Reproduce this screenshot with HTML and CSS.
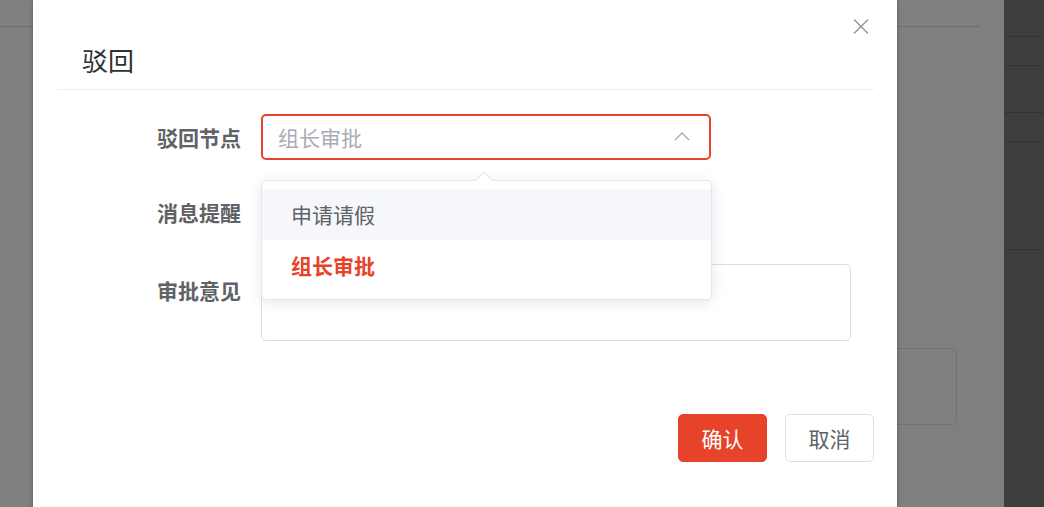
FILE: index.html
```html
<!DOCTYPE html>
<html lang="zh-CN">
<head>
<meta charset="utf-8">
<title>驳回</title>
<link rel="stylesheet" href="styles.css">
</head>
<body>
<div class="page">
  <div class="page-main">
    <div class="page-topline"></div>
    <div class="page-card"></div>
  </div>
  <div class="page-side">
    <div class="side-row r1"></div>
    <div class="side-row r2"></div>
    <div class="side-row r3"></div>
    <div class="side-row r4"></div>
    <div class="side-row r5"></div>
  </div>
</div>

<div class="dialog">
  <button class="dialog-close" aria-label="关闭">
    <svg width="16" height="17" viewBox="0 0 16 17"><path d="M1 1.5 L15 15.5 M15 1.5 L1 15.5" stroke="#909399" stroke-width="1.4" fill="none"/></svg>
  </button>
  <div class="dialog-header">
    <span class="dialog-title">驳回</span>
  </div>
  <div class="dialog-body">
    <div class="form-row row-select">
      <label class="form-label">驳回节点</label>
      <div class="form-control">
        <div class="select is-focus">
          <span class="select-placeholder">组长审批</span>
          <svg class="select-arrow" width="16" height="9" viewBox="0 0 16 9"><path d="M1 8 L8 1 L15 8" stroke="#a8abb2" stroke-width="1.4" fill="none"/></svg>
        </div>
        <div class="dropdown">
          <span class="dropdown-arrow"></span>
          <ul class="dropdown-list">
            <li class="dropdown-item is-hover">申请请假</li>
            <li class="dropdown-item is-selected">组长审批</li>
          </ul>
        </div>
      </div>
    </div>
    <div class="form-row row-plain">
      <label class="form-label">消息提醒</label>
      <div class="form-control"></div>
    </div>
    <div class="form-row row-text">
      <label class="form-label label-top">审批意见</label>
      <div class="form-control">
        <div class="textarea"></div>
      </div>
    </div>
  </div>
  <div class="dialog-footer">
    <button class="btn btn-primary">确认</button>
    <button class="btn btn-default">取消</button>
  </div>
</div>
</body>
</html>
```

FILE: styles.css
```css
* { box-sizing: border-box; }
html, body {
  margin: 0;
  padding: 0;
  width: 1044px;
  height: 507px;
  overflow: hidden;
  font-family: "Noto Sans CJK SC", "Noto Sans", sans-serif;
}
.page {
  display: flex;
  width: 1044px;
  height: 507px;
  background: #7f7f7f;
}
.page-main {
  flex: 1;
  position: relative;
}
.page-topline {
  margin-top: 26px;
  width: 980px;
  height: 1px;
  background: #6e6e6e;
}
.page-card {
  position: absolute;
  left: 760px;
  top: 348px;
  width: 197px;
  height: 77px;
  border: 1px solid #717171;
  border-radius: 5px;
}
.page-side {
  width: 40px;
  background: #3e3e3e;
  position: relative;
}
.side-row {
  position: absolute;
  left: 0;
  right: 0;
  height: 1px;
  background: #343434;
}
.side-row.r1 { top: 36px; }
.side-row.r2 { top: 65px; }
.side-row.r3 { top: 112px; }
.side-row.r4 { top: 141px; }
.side-row.r5 { top: 249px; }

.dialog {
  position: absolute;
  left: 33px;
  top: 0;
  width: 864px;
  height: 520px;
  background: #fff;
  box-shadow: 0 0 4px rgba(0, 0, 0, 0.25);
  padding: 0 23px 0 24px;
}
.dialog-close {
  position: absolute;
  right: 28px;
  top: 18px;
  width: 16px;
  height: 17px;
  padding: 0;
  border: 0;
  background: none;
  display: block;
}
.dialog-close svg { display: block; }
.dialog-header {
  height: 90px;
  padding: 44px 0 0 25px;
  border-bottom: 1px solid #ebeef5;
}
.dialog-title {
  display: block;
  font-size: 26px;
  line-height: 32px;
  color: #303133;
}
.dialog-body {
  padding: 24px 0 0 84px;
}
.form-row {
  display: flex;
  align-items: flex-start;
  gap: 20px;
}
.row-select { margin-bottom: 29px; }
.row-plain { margin-bottom: 29px; height: 46px; }
.form-label {
  width: 100px;
  flex: none;
  text-align: right;
  font-size: 21px;
  font-weight: 700;
  line-height: 46px;
  color: #606266;
}
.label-top { padding-top: 3px; }
.form-control {
  position: relative;
}
.select {
  width: 450px;
  height: 46px;
  border: 2px solid #e6432a;
  border-radius: 5px;
  display: flex;
  align-items: center;
  justify-content: space-between;
  padding: 0 19px 0 15px;
}
.select-placeholder {
  font-size: 21px;
  color: #a8abb2;
}
.select-arrow { display: block; margin-top: -2px; }

.dropdown {
  position: absolute;
  z-index: 5;
  left: 0;
  top: 66px;
  width: 451px;
  background: #fff;
  border: 1px solid #e4e7ed;
  border-radius: 5px;
  box-shadow: 0 3px 14px rgba(0, 0, 0, 0.1);
}
.dropdown-arrow {
  position: absolute;
  left: 216px;
  top: -7px;
  width: 12px;
  height: 12px;
  background: #fff;
  border-top: 1px solid #e4e7ed;
  border-left: 1px solid #e4e7ed;
  transform: rotate(45deg);
}
.dropdown-list {
  list-style: none;
  margin: 0;
  padding: 8px 0;
  position: relative;
}
.dropdown-item {
  height: 51px;
  line-height: 51px;
  padding-left: 29px;
  font-size: 21px;
  color: #606266;
}
.dropdown-item.is-hover { background: #f5f7fa; }
.dropdown-item.is-selected { color: #e6432a; font-weight: 700; }

.textarea {
  width: 590px;
  height: 77px;
  border: 1px solid #dcdfe6;
  border-radius: 5px;
}
.dialog-footer {
  display: flex;
  justify-content: flex-end;
  gap: 18px;
  margin-top: 73px;
}
.btn {
  height: 48px;
  width: 89px;
  border-radius: 5px;
  font-family: inherit;
  font-size: 21px;
  padding: 0;
}
.btn-primary {
  background: #e6432a;
  border: 1px solid #e6432a;
  color: #fff;
}
.btn-default {
  background: #fff;
  border: 1px solid #dcdfe6;
  color: #606266;
}
```
